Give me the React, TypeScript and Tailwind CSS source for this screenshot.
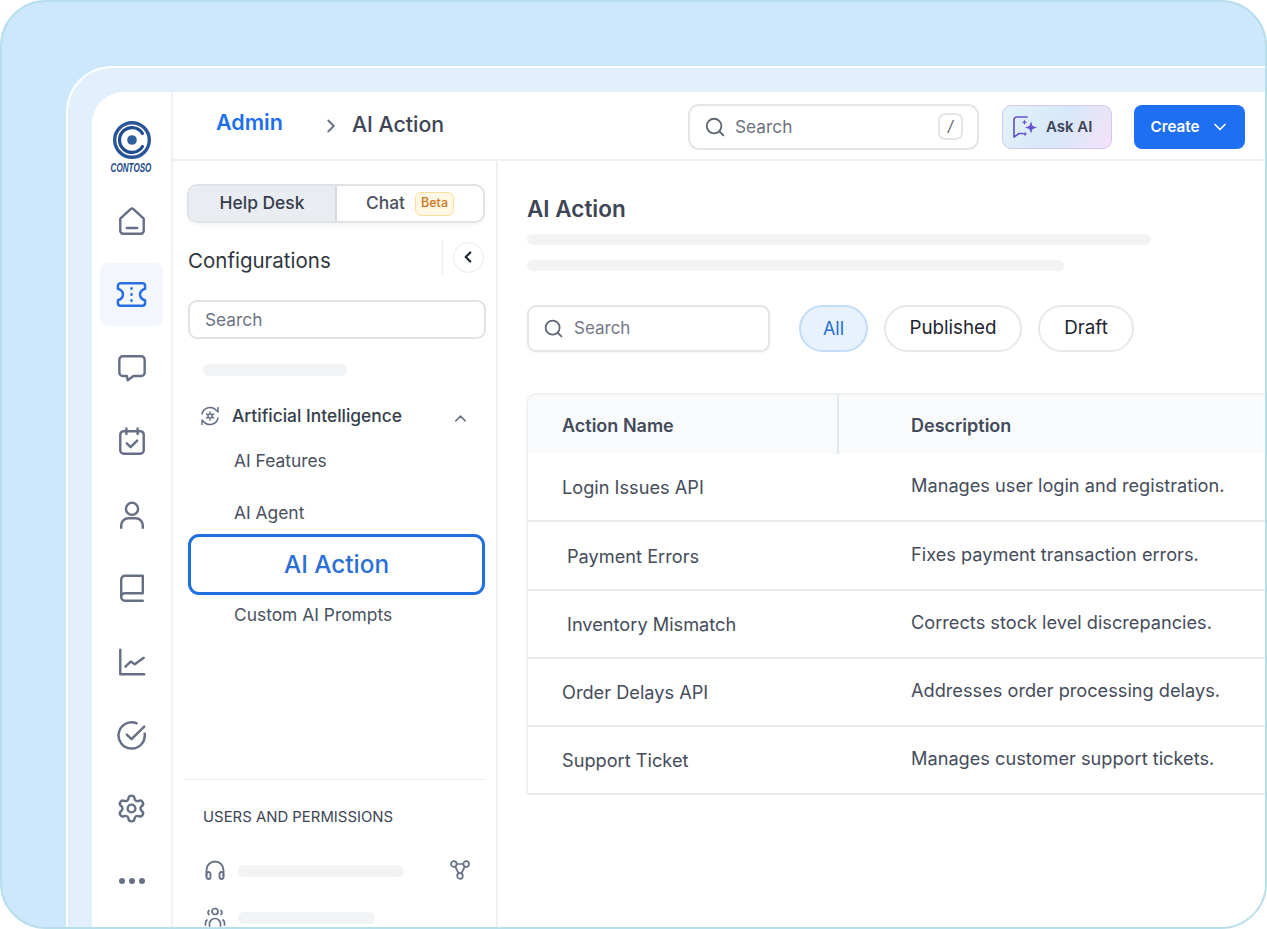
import { ChevronDown, ChevronLeft, ChevronRight, ChevronUp, Search, Settings } from "lucide-react";
import type { ReactNode } from "react";

const Stroke = ({ children, size = 32, className = "text-[#667085]" }: { children: ReactNode; size?: number; className?: string }) => (
  <svg
    width={size}
    height={size}
    viewBox="0 0 32 32"
    fill="none"
    stroke="currentColor"
    strokeWidth={2.6}
    strokeLinecap="round"
    strokeLinejoin="round"
    className={className}
  >
    {children}
  </svg>
);

const railIcons: { key: string; active?: boolean; icon: ReactNode }[] = [
  {
    key: "home",
    icon: (
      <>
        <path d="M3.500 13.500 14.500 3.300a2.200 2.200 0 0 1 3 0L28.500 13.500v13a3 3 0 0 1-3 3h-19a3 3 0 0 1-3-3z" />
        <path d="M10.500 23.500h11" />
      </>
    ),
  },
  {
    key: "ticket",
    active: true,
    icon: (
      <>
        <path d="M4.500 4.500h23a2.500 2.500 0 0 1 2.500 2.500v3c-3.200 1-5.200 3.200-5.200 6s2 5 5.200 6v3a2.500 2.500 0 0 1-2.500 2.500h-23A2.500 2.500 0 0 1 2 25v-3c3.200-1 5.200-3.200 5.200-6S5.200 11 2 10V7a2.500 2.500 0 0 1 2.500-2.500z" />
        <path d="M16 9.500v.5M16 15.700v.6M16 22v.5" />
      </>
    ),
  },
  {
    key: "chat",
    icon: <path d="M6 3.500h20A3.500 3.500 0 0 1 29.500 7v14a3.500 3.500 0 0 1-3.500 3.500H17.500L11.500 29l-1-4.500H6A3.500 3.500 0 0 1 2.500 21V7A3.500 3.500 0 0 1 6 3.500z" />,
  },
  {
    key: "calendar",
    icon: (
      <>
        <rect x="3.500" y="5.500" width="25" height="24" rx="3.500" />
        <path d="M10 2.500v6M22 2.500v6M10.500 18.500l4 4 7-7" />
      </>
    ),
  },
  {
    key: "user",
    icon: (
      <>
        <circle cx="16" cy="9.500" r="6.500" />
        <path d="M4.500 29.500V27a7.500 7.500 0 0 1 7.500-7.500h8a7.500 7.500 0 0 1 7.500 7.500v2.500" />
      </>
    ),
  },
  {
    key: "book",
    icon: <path d="M4.500 25.500V7A4 4 0 0 1 8.500 3h19v18.500H8.500a4 4 0 0 0-4 4 4 4 0 0 0 4 4h19" />,
  },
  {
    key: "chart",
    icon: <path d="M3.500 3v26h25.500M9 21l5.500-5.500 4.500 3L28.500 11.500" />,
  },
  {
    key: "check",
    icon: (
      <>
        <path d="M29.500 14.500A14 14 0 1 1 21 3.500" />
        <path d="M10.500 15.500 15.500 20.500 29 7" />
      </>
    ),
  },
];

const Skeleton = ({ className }: { className: string }) => <div className={`rounded-full bg-[#f1f3f5] ${className}`} />;

const IconRail = () => (
  <aside className="flex h-full w-[81px] shrink-0 flex-col items-center border-r-2 border-[#eef0f3] bg-white">
    <div className="flex h-[92.500px] w-full flex-col items-center pt-[29px]">
      <svg width="38" height="38" viewBox="0 0 38 38" fill="none">
        <circle cx="19" cy="19" r="17.300" stroke="#2b5797" strokeWidth="3.400" />
        <path d="M29.500 12.500A12.400 12.400 0 1 0 29.500 25.500" stroke="#1e4e92" strokeWidth="3.200" strokeLinecap="round" />
        <circle cx="19" cy="19" r="4.800" fill="#2f5f9f" />
      </svg>
      <span className="mt-[2px] scale-x-[0.6] whitespace-nowrap text-[13.500px] font-bold italic leading-[14px] text-[#234a8c] [font-family:'Liberation_Sans',sans-serif]">
        CONTOSO
      </span>
    </div>
    {railIcons.map((item) => (
      <div key={item.key} className="flex h-[73.400px] w-full items-center justify-center">
        {item.active ? (
          <div className="flex h-[63px] w-[63px] items-center justify-center rounded-[8px] bg-[#f3f6fd]">
            <Stroke size={31} className="text-[#2a6fe0]">{item.icon}</Stroke>
          </div>
        ) : (
          <Stroke size={30}>{item.icon}</Stroke>
        )}
      </div>
    ))}
    <div className="flex h-[73.400px] w-full items-center justify-center">
      <Settings size={31} strokeWidth={1.900} className="text-[#667085]" />
    </div>
    <div className="mt-[-1px] flex h-[73.400px] items-center justify-center gap-[4px]">
      <span className="h-[6px] w-[6px] rounded-full bg-[#667085]" />
      <span className="h-[6px] w-[6px] rounded-full bg-[#667085]" />
      <span className="h-[6px] w-[6px] rounded-full bg-[#667085]" />
    </div>
  </aside>
);

const TopBar = () => (
  <header className="flex h-[69px] shrink-0 items-center border-b-2 border-[#eef0f3] bg-white pl-[43px] pt-[2px]">
    <span className="mb-[8px] w-[67px] text-[21.500px] font-semibold leading-none text-[#1e6ff2]">Admin</span>
    <ChevronRight size={22} strokeWidth={2} className="ml-[37px] mr-[27px] mt-[-1px] text-[#667085]" />
    <span className="mb-[4px] ml-[-17px] w-[336px] text-[21.300px] font-medium leading-none text-[#3e4555]">AI Action</span>
    <div className="flex h-[46px] w-[291px] items-center rounded-[11px] border-2 border-[#e3e5ea] bg-white pl-[14px] pr-[14px]">
      <Search size={22} strokeWidth={2} className="text-[#5f6675]" />
      <span className="ml-[9px] flex-1 text-[17.300px] leading-none text-[#6d7280]">Search</span>
      <span className="flex h-[27px] w-[25px] items-center justify-center rounded-[7px] border-2 border-[#e3e5ea] text-[15px] italic text-[#555b68]">/</span>
    </div>
    <div className="ml-[23px] flex h-[44px] w-[110px] items-center rounded-[9px] border border-[#d5c8f3] bg-[linear-gradient(120deg,#e3f3f8_0%,#d6e8fa_50%,#f5e2f8_100%)] pl-[9px]">
      <svg width="26" height="26" viewBox="0 0 26 26" fill="none">
        <path d="M15 3H5a3 3 0 0 0-3 3v17l5-3.500h4" stroke="#6a54c9" strokeWidth="1.700" strokeLinecap="round" strokeLinejoin="round" />
        <path d="M19 7.500l1.600 4.400L25 13.500l-4.400 1.600L19 19.500l-1.600-4.400L13 13.500l4.400-1.600z" fill="#6a54c9" />
        <path d="M12.500 5.500l.8 2 2 .8-2 .8-.8 2-.8-2-2-.8 2-.8zM13 17.500l.7 1.800 1.800.7-1.800.7-.7 1.800-.7-1.800-1.800-.7 1.800-.7z" fill="#6a54c9" />
      </svg>
      <span className="ml-[8px] text-[15px] font-semibold leading-none text-[#3c4354]">Ask AI</span>
    </div>
    <div className="ml-[22px] flex h-[44px] w-[111px] items-center justify-center gap-[11px] rounded-[8px] bg-[#1e6ff2] pl-[2px] text-[15.200px] font-semibold leading-none text-white">
      Create
      <ChevronDown size={20} strokeWidth={2} />
    </div>
  </header>
);

const ConfigPanel = () => (
  <section className="flex h-full w-[325px] shrink-0 flex-col border-r-2 border-[#f0f1f4] bg-white pl-[14px]">
    <div className="mt-[23px] flex h-[39px] w-[298px] overflow-hidden rounded-[10px] border-2 border-[#e0e2e7] shadow-[0_3px_4px_rgba(16,24,40,0.04)]">
      <div className="flex w-[148px] items-center justify-center border-r-2 border-[#d6d9df] bg-[#e9ecf1] text-[17.400px] font-medium text-[#363d4c]">Help Desk</div>
      <div className="flex flex-1 items-center justify-center gap-[10px] text-[17.400px] font-medium text-[#4a5160]">
        Chat
        <span className="flex h-[24px] w-[39px] items-center justify-center rounded-[6px] border border-[#fbdf9f] bg-[#fff8e5] text-[12.500px] font-medium text-[#d0741a]">Beta</span>
      </div>
    </div>
    <div className="mt-[15px] flex h-[38px] w-[298px] items-center">
      <span className="ml-[1px] mt-[9px] flex-1 text-[20.500px] font-normal leading-none text-[#30363f]">Configurations</span>
      <div className="h-[35px] w-[1px] bg-[#eceef1]" />
      <div className="ml-[10px] mr-[1px] flex h-[31px] w-[31px] items-center justify-center rounded-full border border-[#e9ebee]">
        <ChevronLeft size={18} strokeWidth={3} className="ml-[-2px] text-[#1f2937]" />
      </div>
    </div>
    <div className="ml-[1px] mt-[24px] flex h-[39px] w-[298px] items-center rounded-[9px] border-2 border-[#e0e2e7] pl-[15px] text-[17.300px] text-[#6d7386]">Search</div>
    <Skeleton className="ml-[16px] mt-[25px] h-[12px] w-[144px]" />
    <div className="mt-[28px] flex h-[24px] items-center pl-[12px]">
      <svg width="22" height="22" viewBox="0 0 22 22" fill="none" stroke="#667085" strokeWidth="1.500" strokeLinecap="round" strokeLinejoin="round">
        <path d="M3 9a8.300 8.300 0 0 1 14.500-3.500L19 7V2.500M19 13a8.300 8.300 0 0 1-14.500 3.500L3 15v4.500" />
        <circle cx="11" cy="11" r="2" />
        <path d="M11 7v1M11 14v1M7.500 9l1 .6M13.500 12.400l1 .6M7.500 13l1-.6M13.500 9.600l1-.6" />
      </svg>
      <span className="ml-[11px] w-[219px] text-[17.400px] font-medium leading-none text-[#363d4c]">Artificial Intelligence</span>
      <ChevronUp size={19} strokeWidth={1.800} className="mt-[4px] text-[#667085]" />
    </div>
    <div className="ml-[47px] mt-[24.300px] text-[17.400px] leading-none text-[#4a5160]">AI Features</div>
    <div className="ml-[47px] mt-[34.600px] text-[17.400px] leading-none text-[#4a5160]">AI Agent</div>
    <div className="ml-[1px] mt-[12.300px] flex h-[61px] w-[297px] items-center justify-center rounded-[11px] border-[3px] border-[#1e6fe0] text-[24.300px] font-medium text-[#2a6fd6]">AI Action</div>
    <div className="ml-[47px] mt-[11.300px] text-[17.400px] leading-none text-[#4a5160]">Custom AI Prompts</div>
    <div className="ml-[-4px] mt-[155.300px] h-[1px] w-[302px] shrink-0 bg-[#eceef1]" />
    <div className="ml-[16px] mt-[29.500px] text-[14.900px] leading-none text-[#3e4555]">USERS AND PERMISSIONS</div>
    <div className="mt-[34.600px] flex h-[24px] items-center pl-[17px]">
      <svg width="22" height="22" viewBox="0 0 22 22" fill="none" stroke="#667085" strokeWidth="1.800" strokeLinecap="round" className="mb-[2px]">
        <path d="M2.500 17v-6a8.500 8.500 0 0 1 17 0v6" />
        <rect x="2.500" y="13" width="4" height="7" rx="2" />
        <rect x="15.500" y="13" width="4" height="7" rx="2" />
      </svg>
      <Skeleton className="ml-[12px] h-[12px] w-[166px]" />
      <svg width="22" height="22" viewBox="0 0 22 22" fill="none" stroke="#667085" strokeWidth="1.700" className="mb-[2px] ml-[45px]">
        <circle cx="4.800" cy="5" r="2.800" />
        <circle cx="17.200" cy="5" r="2.800" />
        <circle cx="11" cy="17" r="2.800" />
        <path d="M7.600 5h6.800M6.200 7.500l3.500 7M15.800 7.500l-3.500 7" />
      </svg>
    </div>
    <div className="mt-[23px] flex h-[24px] items-center pl-[17px]">
      <svg width="22" height="22" viewBox="0 0 22 22" fill="none" stroke="#667085" strokeWidth="1.700" strokeLinecap="round" className="mb-[2px]">
        <circle cx="11" cy="5.500" r="3" />
        <path d="M5 4.500a2.500 2.500 0 0 0 0 4M17 4.500a2.500 2.500 0 0 1 0 4M5.500 20v-2a5.500 5.500 0 0 1 11 0v2M1.500 19v-2a4 4 0 0 1 1.500-3M20.500 19v-2a4 4 0 0 0-1.500-3" />
      </svg>
      <Skeleton className="ml-[12px] h-[12px] w-[137px]" />
    </div>
  </section>
);

const rows = [
  { name: "Login Issues API", desc: "Manages user login and registration.", inset: false, h: "h-[68px]" },
  { name: "Payment Errors", desc: "Fixes payment transaction errors.", inset: true, h: "h-[69px]" },
  { name: "Inventory Mismatch", desc: "Corrects stock level discrepancies.", inset: true, h: "h-[68px]" },
  { name: "Order Delays API", desc: "Addresses order processing delays.", inset: false, h: "h-[68px]" },
  { name: "Support Ticket", desc: "Manages customer support tickets.", inset: false, h: "h-[68px]" },
];

const MainPanel = () => (
  <main className="min-w-0 flex-1 bg-white pl-[29px]">
    <h1 className="mt-[37px] text-[22.500px] font-semibold leading-none text-[#3e4555]">AI Action</h1>
    <Skeleton className="mt-[13px] h-[11px] w-[624px]" />
    <Skeleton className="mt-[15px] h-[11px] w-[537px]" />
    <div className="mt-[34px] flex h-[47px] items-center">
      <div className="flex h-[47px] w-[243px] items-center rounded-[9px] border-2 border-[#e3e5ea] pl-[14px] shadow-[0_1px_2px_rgba(16,24,40,0.05)]">
        <Search size={21} strokeWidth={2} className="text-[#5f6675]" />
        <span className="ml-[10px] text-[17px] leading-none text-[#737887]">Search</span>
      </div>
      <div className="ml-[29px] flex h-[47px] w-[69px] items-center justify-center rounded-full border-2 border-[#c3dcf7] bg-[#e8f2fd] text-[18px] text-[#2a6fd6]">All</div>
      <div className="ml-[16px] flex h-[47px] w-[138px] items-center justify-center rounded-full border-2 border-[#e6e8ec] text-[18.800px] text-[#1f2430]">Published</div>
      <div className="ml-[16px] flex h-[47px] w-[96px] items-center justify-center rounded-full border-2 border-[#e6e8ec] text-[18.800px] text-[#1f2430]">Draft</div>
    </div>
    <div className="ml-[-1px] mt-[41px] w-[760px] rounded-tl-[10px] border-l-2 border-t-2 border-[#eff1f3]">
      <div className="flex h-[59px] items-stretch rounded-tl-[8px] bg-[#f8fafb] text-[18px] font-semibold text-[#434a5a]">
        <div className="flex w-[311px] items-center border-r-2 border-[#e4e7eb] pl-[34px] pt-[2px]">Action Name</div>
        <div className="flex flex-1 items-center pl-[72px] pt-[2px]">Description</div>
      </div>
      {rows.map((row) => (
        <div key={row.name} className={`flex ${row.h} items-center border-b-2 border-[#e9ebee] text-[18.200px] text-[#454c5b]`}>
          <div className={`mt-[3px] w-[311px] ${row.inset ? "pl-[39px]" : "pl-[34px]"}`}>{row.name}</div>
          <div className="mt-[-1px] flex-1 whitespace-nowrap pl-[72px]">{row.desc}</div>
        </div>
      ))}
    </div>
  </main>
);

export default function App() {
  return (
    <div className="h-[929px] w-[1267px] bg-white [font-family:Inter,'Noto_Sans',sans-serif]">
      <div className="h-full w-full overflow-hidden rounded-[46px] border-2 border-[#b8deec] bg-[#cde8fd] pl-[64px] pt-[64px]">
        <div className="h-[calc(100%+50px)] w-[calc(100%+50px)] rounded-tl-[46px] border-l-2 border-t-2 border-white bg-[#e2f0fd] pl-[24px] pt-[24px]">
          <div className="flex h-[840px] w-[1173px] overflow-hidden rounded-tl-[32px] bg-white">
            <IconRail />
            <div className="flex min-w-0 flex-1 flex-col">
              <TopBar />
              <div className="flex min-h-0 flex-1">
                <ConfigPanel />
                <MainPanel />
              </div>
            </div>
          </div>
        </div>
      </div>
    </div>
  );
}
